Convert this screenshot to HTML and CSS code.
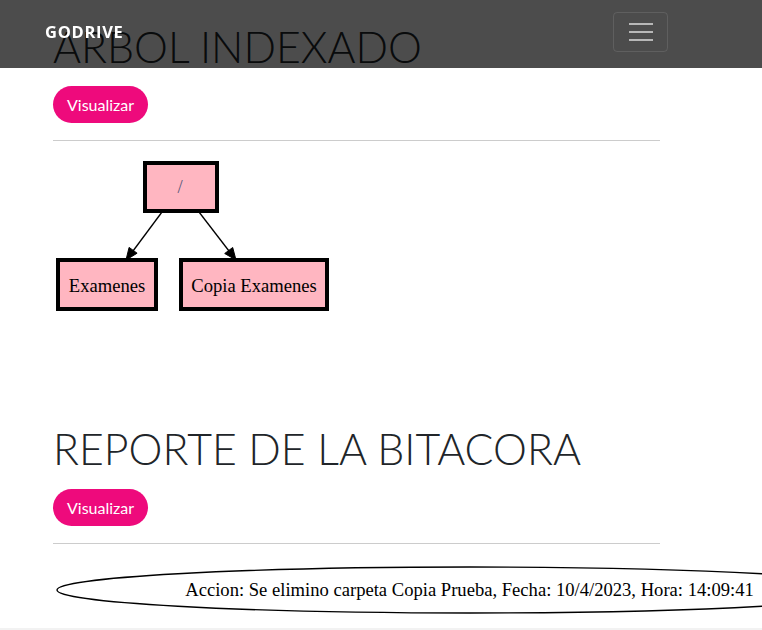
FILE: index.html
```html
<!DOCTYPE html>
<html lang="es">
<head>
<meta charset="utf-8">
<title>GoDrive</title>
<link rel="stylesheet" href="styles.css">
</head>
<body>
<nav class="navbar">
  <a class="brand" href="#">GODRIVE</a>
  <button class="toggler" type="button" aria-label="Menu">
    <span class="bar"></span><span class="bar"></span><span class="bar"></span>
  </button>
</nav>
<main class="container">
  <section class="report">
    <h1 class="title">ARBOL INDEXADO</h1>
    <button class="btn-pill" type="button">Visualizar</button>
    <hr class="rule">
    <svg class="graph tree" width="290" height="273" viewBox="0 0 290 273">
      <g fill="#ffb6c1" stroke="#000" stroke-width="4">
        <rect x="92" y="13" width="72" height="48"/>
        <rect x="5" y="110" width="98" height="49"/>
        <rect x="128" y="110" width="146" height="49"/>
      </g>
      <g stroke="#000" stroke-width="1.3">
        <line x1="109" y1="62" x2="80" y2="101"/>
        <line x1="146" y1="62" x2="176" y2="101"/>
      </g>
      <g fill="#000" stroke="#000" stroke-width="1">
        <polygon points="73,110 84.1,103.2 76.1,97.4"/>
        <polygon points="183,110 179.7,97.5 171.7,103.5"/>
      </g>
      <g font-family="'Liberation Serif', 'Times New Roman', serif" font-size="18.6" text-anchor="middle">
        <text x="127" y="43" fill="#5a5a7a">/</text>
        <text x="54" y="142" fill="#000">Examenes</text>
        <text x="201" y="142" fill="#000">Copia Examenes</text>
      </g>
    </svg>
  </section>
  <section class="report">
    <h1 class="title">REPORTE DE LA BITACORA</h1>
    <button class="btn-pill" type="button">Visualizar</button>
    <hr class="rule">
    <div class="log-wrap">
      <svg class="graph log" width="840" height="76" viewBox="0 0 840 76">
        <ellipse cx="417" cy="38" rx="413" ry="23" fill="none" stroke="#000" stroke-width="1.4"/>
        <text x="416.5" y="44" text-anchor="middle" font-family="'Liberation Serif', 'Times New Roman', serif" font-size="18.6" fill="#000">Accion: Se elimino carpeta Copia Prueba, Fecha: 10/4/2023, Hora: 14:09:41</text>
      </svg>
    </div>
  </section>
</main>
<footer class="footer"></footer>
</body>
</html>
```
FILE: styles.css
```css
html {
  overflow-x: hidden;
}
body {
  margin: 0;
  font-family: Lato, "Open Sans", "Liberation Sans", sans-serif;
  color: #212529;
  background: #fff;
}
.navbar {
  position: fixed;
  top: 0;
  left: 0;
  right: 0;
  height: 68px;
  background: rgba(0, 0, 0, 0.7);
  display: flex;
  align-items: center;
  justify-content: space-between;
  padding: 0 94px 0 45px;
  z-index: 10;
  box-sizing: border-box;
}
.brand {
  color: #fff;
  text-decoration: none;
  font-family: "Open Sans", Lato, sans-serif;
  font-weight: 700;
  font-size: 16.5px;
  letter-spacing: 0.7px;
  margin-top: -6px;
}
.toggler {
  width: 55px;
  height: 40px;
  margin-top: -5px;
  background: transparent;
  border: 1px solid rgba(255, 255, 255, 0.1);
  border-radius: 4px;
  display: flex;
  flex-direction: column;
  align-items: center;
  justify-content: center;
  gap: 6px;
  padding: 0;
}
.toggler .bar {
  display: block;
  width: 24px;
  height: 2px;
  background: rgba(255, 255, 255, 0.6);
}
.container {
  width: 607px;
  padding-left: 53px;
}
.title {
  font-family: Lato, sans-serif;
  font-weight: 300;
  font-size: 42.8px;
  line-height: 1.2;
  margin: 21px 0 14px;
  color: #212529;
}
.report + .report .title {
  margin-top: 0;
}
.btn-pill {
  display: block;
  height: 37px;
  padding: 0 14px;
  border: none;
  border-radius: 19px;
  background: #ee0a7c;
  color: #fff;
  font-family: Lato, sans-serif;
  font-size: 16px;
}
.rule {
  margin: 17px 0 0;
  border: 0;
  border-top: 1px solid #cccccc;
}
.graph {
  display: block;
}
.tree {
  margin-top: 9px;
}
.log-wrap {
  margin-top: 8px;
  width: 840px;
}
.footer {
  height: 20px;
  background: #f2f2f2;
}
```
